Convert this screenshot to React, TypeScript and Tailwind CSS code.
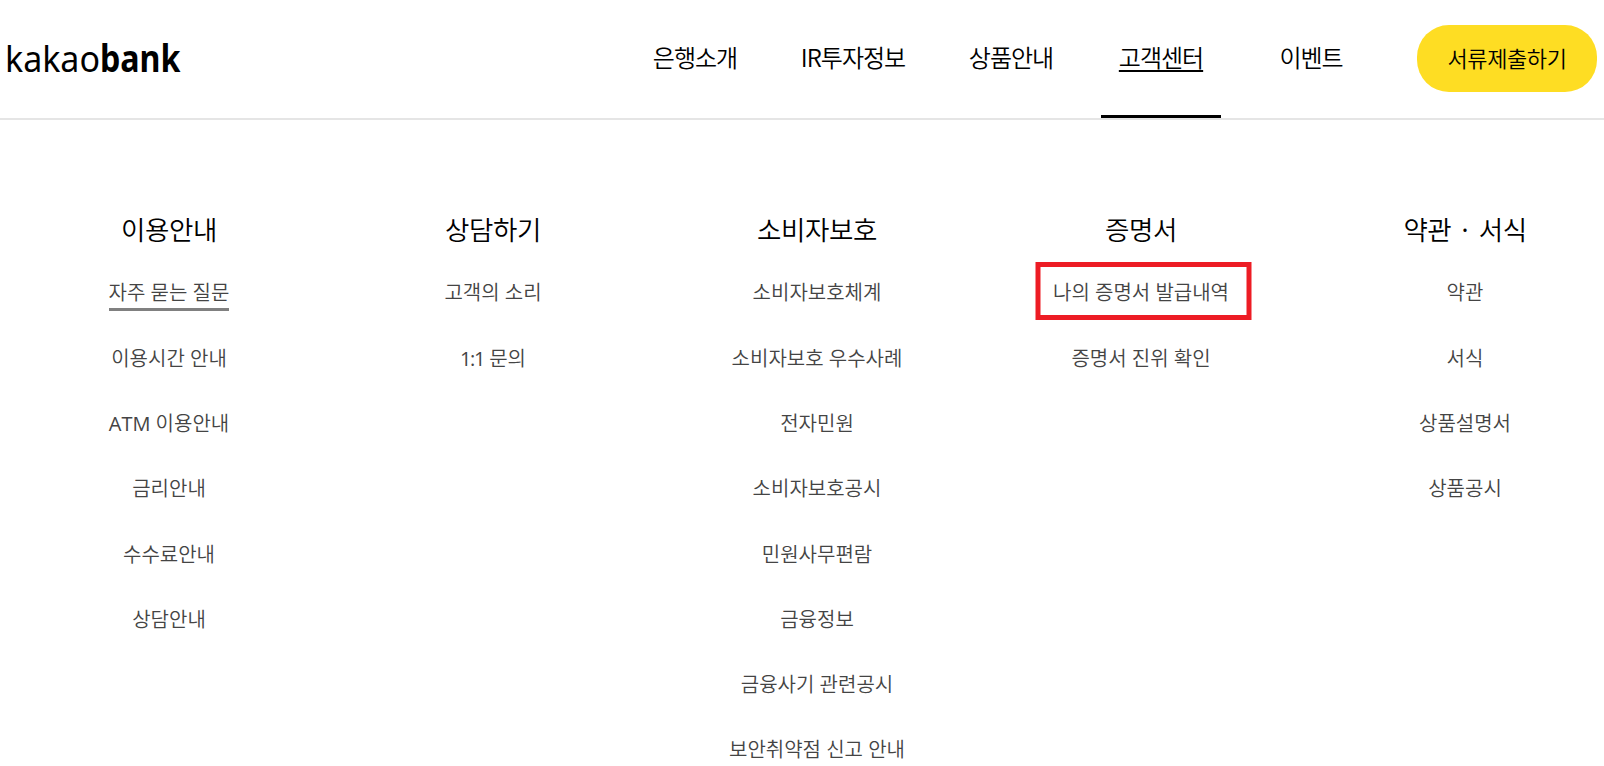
import React from 'react';

interface NavItem {
  label: string;
  className: string;
  active?: boolean;
}

interface MenuLink {
  label: string;
  prefix?: string;
  prefixClass?: string;
  underlined?: boolean;
  marked?: boolean;
}

interface MenuColumn {
  title: string;
  links: MenuLink[];
}

const navItems: NavItem[] = [
  { label: '은행소개', className: 'w-[120px] mr-[22px]' },
  { label: 'IR투자정보', className: 'w-[152px] mr-[22px]' },
  { label: '상품안내', className: 'w-[120px] mr-[30px]' },
  { label: '고객센터', className: 'w-[120px] mr-[40px]', active: true },
  { label: '이벤트', className: 'w-[100px] mr-[56px]' },
];

const columns: MenuColumn[] = [
  {
    title: '이용안내',
    links: [
      { label: '자주 묻는 질문', underlined: true },
      { label: '이용시간 안내' },
      { prefix: 'ATM', prefixClass: 'font-normal', label: ' 이용안내' },
      { label: '금리안내' },
      { label: '수수료안내' },
      { label: '상담안내' },
    ],
  },
  {
    title: '상담하기',
    links: [{ label: '고객의 소리' }, { prefix: '1:1', prefixClass: 'font-normal tracking-[-1.4px]', label: ' 문의' }],
  },
  {
    title: '소비자보호',
    links: [
      { label: '소비자보호체계' },
      { label: '소비자보호 우수사례' },
      { label: '전자민원' },
      { label: '소비자보호공시' },
      { label: '민원사무편람' },
      { label: '금융정보' },
      { label: '금융사기 관련공시' },
      { label: '보안취약점 신고 안내' },
    ],
  },
  {
    title: '증명서',
    links: [{ label: '나의 증명서 발급내역', marked: true }, { label: '증명서 진위 확인' }],
  },
  {
    title: '약관 · 서식',
    links: [{ label: '약관' }, { label: '서식' }, { label: '상품설명서' }, { label: '상품공시' }],
  },
];

const Logo: React.FC = () => (
  <svg width="184" height="54" viewBox="0 0 184 54" className="block overflow-visible" fontFamily="'Noto Sans', 'Open Sans', sans-serif" fontSize="37">
    <text x="-2" y="40" fontWeight="400" textLength="95" lengthAdjust="spacingAndGlyphs">kakao</text>
    <text x="93" y="40" fontWeight="700" textLength="80.5" lengthAdjust="spacingAndGlyphs">bank</text>
  </svg>
);

const Header: React.FC = () => (
  <header className="flex h-[120px] items-stretch border-b-2 border-[#e5e5e5] pl-[7px] pr-[7px]">
    <a href="#" className="mt-[32px] block h-[54px]"><Logo /></a>
    <nav className="ml-auto flex text-[24px] font-[350] tracking-[-1px]">
      {navItems.map((item) => (
        <a
          key={item.label}
          href="#"
          className={`flex items-center justify-center border-b-[3px] pb-px whitespace-nowrap ${item.className} ${item.active ? 'border-black underline decoration-2 underline-offset-3' : 'border-transparent'}`}
        >
          {item.label}
        </a>
      ))}
    </nav>
    <button className="mt-[25px] h-[67px] w-[180px] rounded-[32px] bg-[#fedd23] pb-[2px] text-[22px] font-[350] tracking-[-0.4px]">
      서류제출하기
    </button>
  </header>
);

const Column: React.FC<MenuColumn> = ({ title, links }) => (
  <section className="flex w-[324px] shrink-0 flex-col items-center">
    <h2 className="flex h-[42px] items-center font-['Noto_Sans_CJK_KR',sans-serif] text-[26.5px] font-[350] tracking-[-0.4px] whitespace-pre [word-spacing:1px]">{title}</h2>
    <ul className="mt-[10px] text-[20px] font-[350] text-[#444]">
      {links.map((link) => (
        <li key={link.label} className="relative flex h-[65.3px] items-center justify-center">
          {link.marked && (
            <span className="absolute top-[2px] left-1/2 h-[58px] w-[216px] -translate-x-[105.5px] border-[5px] border-[#ed1c24]" />
          )}
          <a
            href="#"
            className={`pt-[1.5px] whitespace-nowrap ${link.underlined ? 'relative after:absolute after:inset-x-0 after:bottom-[-3px] after:h-[3px] after:bg-[#808080]' : ''}`}
          >
            {link.prefix && <span className={link.prefixClass}>{link.prefix}</span>}
            {link.label}
          </a>
        </li>
      ))}
    </ul>
  </section>
);

const App: React.FC = () => (
  <div className="h-[766px] w-full overflow-hidden bg-white font-['Noto_Sans_CJK_KR',sans-serif] text-black">
    <Header />
    <main className="flex pt-[88px] pl-[7px] font-['Open_Sans','Noto_Sans_CJK_KR',sans-serif]">
      {columns.map((column) => (
        <Column key={column.title} {...column} />
      ))}
    </main>
  </div>
);

export default App;
